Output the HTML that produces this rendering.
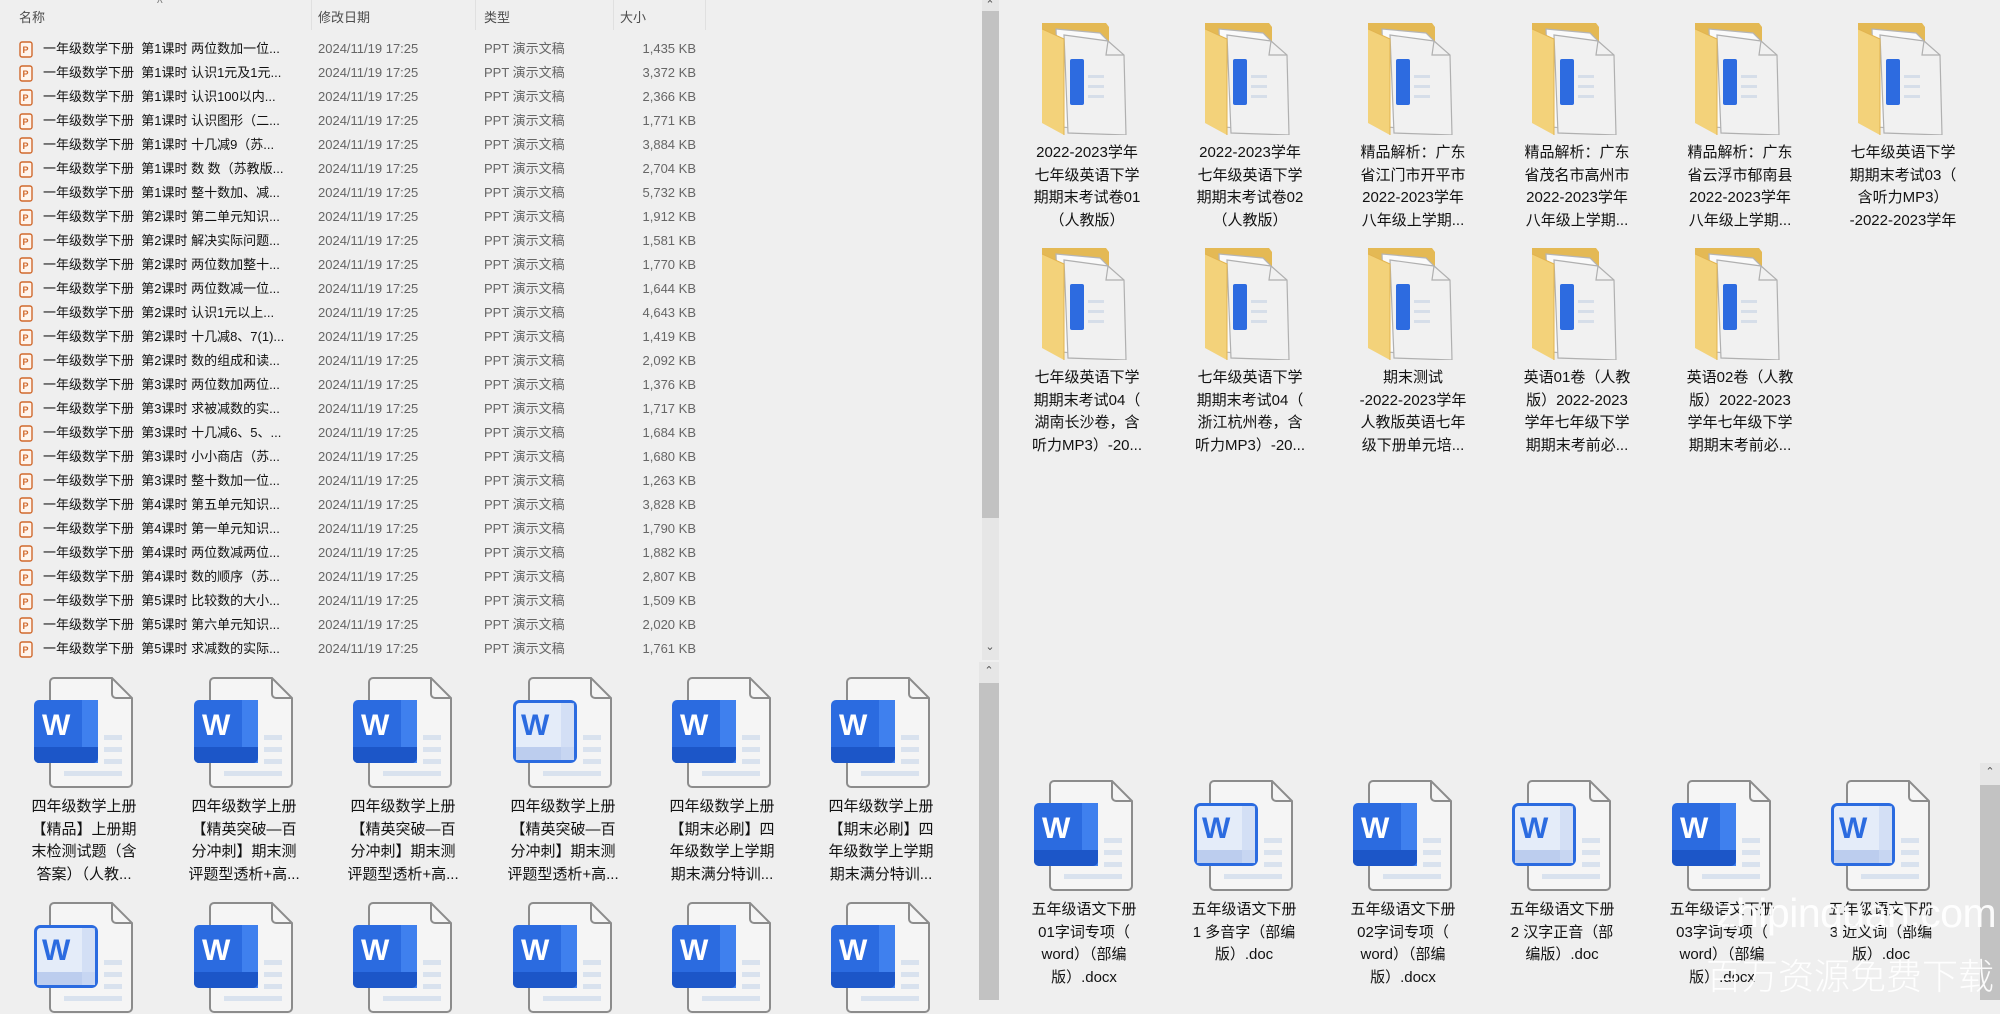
<!DOCTYPE html>
<html><head><meta charset="utf-8">
<style>
*{margin:0;padding:0;box-sizing:border-box}
body{width:2000px;height:1000px;background:#efefef;position:relative;overflow:hidden;font-family:"Liberation Sans","Noto Sans CJK SC",sans-serif}
.h{position:absolute;top:7px;font-size:13px;color:#4c4c4c}
.sep{position:absolute;top:0;width:1px;height:30px;background:#e0e0e0}
.r{position:absolute;left:0;height:24px;width:710px;font-size:13px;line-height:24px}
.r .i{position:absolute;left:19px;top:4px;width:14px;height:17px}
.r .n{position:absolute;left:43px;color:#111;white-space:nowrap}
.r .d{position:absolute;left:318px;color:#666}
.r .t{position:absolute;left:484px;color:#666}
.r .s{position:absolute;right:14px;color:#666}
.it{position:absolute;width:160px;text-align:center}
.it svg{display:block;margin:0 auto}
.it .l{font-size:15px;line-height:22.5px;color:#111;margin-top:7px;white-space:nowrap}
.sb{position:absolute;background:#e6e6e6}
.th{position:absolute;background:#c2c2c2}
.ar{position:absolute;font-size:11px;color:#555;width:18px;text-align:center}
.wm{position:absolute;color:rgba(255,255,255,0.93);white-space:nowrap}
</style></head><body>
<svg width="0" height="0" style="position:absolute">
<defs>
<symbol id="wd" viewBox="0 0 100 112">
<path d="M20,1 H78 L98,21 V106 a4,4 0 0 1 -4,4 H20 a4,4 0 0 1 -4,-4 V5 a4,4 0 0 1 4,-4 Z" fill="#f5f5f5" stroke="#8c8c8c" stroke-width="2"/>
<path d="M78,1 V17 a4,4 0 0 0 4,4 H98" fill="none" stroke="#8c8c8c" stroke-width="2"/>
<rect x="70" y="58" width="18" height="5" fill="#d9e2ee"/><rect x="70" y="70" width="18" height="5" fill="#d9e2ee"/><rect x="70" y="82" width="18" height="5" fill="#d9e2ee"/><rect x="30" y="94" width="58" height="5" fill="#d9e2ee"/>
<rect x="0" y="23" width="64" height="63" rx="5" fill="#2b6be0"/>
<rect x="48" y="23" width="16" height="63" fill="#3f80ee"/>
<path d="M0,70 H64 V81 a5,5 0 0 1 -5,5 H5 a5,5 0 0 1 -5,-5 Z" fill="#1c56c8"/>
<text x="8" y="58" font-family="Liberation Sans" font-weight="bold" font-size="30" fill="#fff">W</text>
</symbol>
<symbol id="wo" viewBox="0 0 100 112">
<path d="M20,1 H78 L98,21 V106 a4,4 0 0 1 -4,4 H20 a4,4 0 0 1 -4,-4 V5 a4,4 0 0 1 4,-4 Z" fill="#f5f5f5" stroke="#8c8c8c" stroke-width="2"/>
<path d="M78,1 V17 a4,4 0 0 0 4,4 H98" fill="none" stroke="#8c8c8c" stroke-width="2"/>
<rect x="70" y="58" width="18" height="5" fill="#d9e2ee"/><rect x="70" y="70" width="18" height="5" fill="#d9e2ee"/><rect x="70" y="82" width="18" height="5" fill="#d9e2ee"/><rect x="30" y="94" width="58" height="5" fill="#d9e2ee"/>
<rect x="1.5" y="24.5" width="61" height="60" rx="5" fill="#e4ecf9" stroke="#2b6be0" stroke-width="3"/>
<rect x="3" y="70" width="58" height="13" fill="#bccdee"/>
<rect x="48" y="26" width="13" height="57" fill="#ccdaf3" opacity=".7"/>
<text x="8" y="58" font-family="Liberation Sans" font-weight="bold" font-size="30" fill="#2b6be0">W</text>
</symbol>
<symbol id="fd" viewBox="0 0 90 112">
<path d="M0,0 H64 L67,4 V100 H0 Z" fill="#e4b954"/>
<path d="M14,6 L58,10 L72,24 L72,108 L18,104 Z" fill="#fafafa" stroke="#b5b5b5" stroke-width="1.2"/>
<path d="M22,12 L66,18 L82,32 L84,112 L26,110 Z" fill="#f1f1f1" stroke="#b0b0b0" stroke-width="1.2"/>
<path d="M66,18 L64,32 L82,32" fill="none" stroke="#b0b0b0" stroke-width="1.2"/>
<rect x="28" y="36" width="14" height="46" rx="2" fill="#2d6be0"/>
<rect x="46" y="52" width="16" height="3" fill="#d6dee9"/><rect x="46" y="62" width="16" height="3" fill="#d6dee9"/><rect x="46" y="72" width="16" height="3" fill="#d6dee9"/>
<path d="M0,6 L22,16 L22,112 L0,100 Z" fill="#f3d27a"/>
<path d="M0,6 L22,16 L22,112" fill="none" stroke="#e2b450" stroke-width="1"/>
</symbol>
<symbol id="pp" viewBox="0 0 14 17">
<rect x="1" y="1" width="12" height="15" rx="2" fill="#fff4ec" stroke="#d0692d" stroke-width="1.4"/>
<text x="3.5" y="12" font-family="Liberation Sans" font-size="9" font-weight="bold" fill="#d0692d">P</text>
</symbol>
</defs></svg>

<div class="h" style="left:19px">名称</div>
<div style="position:absolute;left:157px;top:-4px;font-size:12px;color:#777">^</div>
<div class="sep" style="left:311px"></div>
<div class="h" style="left:318px">修改日期</div>
<div class="sep" style="left:475px"></div>
<div class="h" style="left:484px">类型</div>
<div class="sep" style="left:613px"></div>
<div class="h" style="left:620px">大小</div>
<div class="sep" style="left:705px"></div>

<div class="r" style="top:37px"><svg class="i"><use href="#pp"/></svg><span class="n">一年级数学下册&nbsp;&nbsp;第1课时 两位数加一位...</span><span class="d">2024/11/19 17:25</span><span class="t">PPT 演示文稿</span><span class="s">1,435 KB</span></div>
<div class="r" style="top:61px"><svg class="i"><use href="#pp"/></svg><span class="n">一年级数学下册&nbsp;&nbsp;第1课时 认识1元及1元...</span><span class="d">2024/11/19 17:25</span><span class="t">PPT 演示文稿</span><span class="s">3,372 KB</span></div>
<div class="r" style="top:85px"><svg class="i"><use href="#pp"/></svg><span class="n">一年级数学下册&nbsp;&nbsp;第1课时 认识100以内...</span><span class="d">2024/11/19 17:25</span><span class="t">PPT 演示文稿</span><span class="s">2,366 KB</span></div>
<div class="r" style="top:109px"><svg class="i"><use href="#pp"/></svg><span class="n">一年级数学下册&nbsp;&nbsp;第1课时 认识图形（二...</span><span class="d">2024/11/19 17:25</span><span class="t">PPT 演示文稿</span><span class="s">1,771 KB</span></div>
<div class="r" style="top:133px"><svg class="i"><use href="#pp"/></svg><span class="n">一年级数学下册&nbsp;&nbsp;第1课时 十几减9（苏...</span><span class="d">2024/11/19 17:25</span><span class="t">PPT 演示文稿</span><span class="s">3,884 KB</span></div>
<div class="r" style="top:157px"><svg class="i"><use href="#pp"/></svg><span class="n">一年级数学下册&nbsp;&nbsp;第1课时 数 数（苏教版...</span><span class="d">2024/11/19 17:25</span><span class="t">PPT 演示文稿</span><span class="s">2,704 KB</span></div>
<div class="r" style="top:181px"><svg class="i"><use href="#pp"/></svg><span class="n">一年级数学下册&nbsp;&nbsp;第1课时 整十数加、减...</span><span class="d">2024/11/19 17:25</span><span class="t">PPT 演示文稿</span><span class="s">5,732 KB</span></div>
<div class="r" style="top:205px"><svg class="i"><use href="#pp"/></svg><span class="n">一年级数学下册&nbsp;&nbsp;第2课时 第二单元知识...</span><span class="d">2024/11/19 17:25</span><span class="t">PPT 演示文稿</span><span class="s">1,912 KB</span></div>
<div class="r" style="top:229px"><svg class="i"><use href="#pp"/></svg><span class="n">一年级数学下册&nbsp;&nbsp;第2课时 解决实际问题...</span><span class="d">2024/11/19 17:25</span><span class="t">PPT 演示文稿</span><span class="s">1,581 KB</span></div>
<div class="r" style="top:253px"><svg class="i"><use href="#pp"/></svg><span class="n">一年级数学下册&nbsp;&nbsp;第2课时 两位数加整十...</span><span class="d">2024/11/19 17:25</span><span class="t">PPT 演示文稿</span><span class="s">1,770 KB</span></div>
<div class="r" style="top:277px"><svg class="i"><use href="#pp"/></svg><span class="n">一年级数学下册&nbsp;&nbsp;第2课时 两位数减一位...</span><span class="d">2024/11/19 17:25</span><span class="t">PPT 演示文稿</span><span class="s">1,644 KB</span></div>
<div class="r" style="top:301px"><svg class="i"><use href="#pp"/></svg><span class="n">一年级数学下册&nbsp;&nbsp;第2课时 认识1元以上...</span><span class="d">2024/11/19 17:25</span><span class="t">PPT 演示文稿</span><span class="s">4,643 KB</span></div>
<div class="r" style="top:325px"><svg class="i"><use href="#pp"/></svg><span class="n">一年级数学下册&nbsp;&nbsp;第2课时 十几减8、7(1)...</span><span class="d">2024/11/19 17:25</span><span class="t">PPT 演示文稿</span><span class="s">1,419 KB</span></div>
<div class="r" style="top:349px"><svg class="i"><use href="#pp"/></svg><span class="n">一年级数学下册&nbsp;&nbsp;第2课时 数的组成和读...</span><span class="d">2024/11/19 17:25</span><span class="t">PPT 演示文稿</span><span class="s">2,092 KB</span></div>
<div class="r" style="top:373px"><svg class="i"><use href="#pp"/></svg><span class="n">一年级数学下册&nbsp;&nbsp;第3课时 两位数加两位...</span><span class="d">2024/11/19 17:25</span><span class="t">PPT 演示文稿</span><span class="s">1,376 KB</span></div>
<div class="r" style="top:397px"><svg class="i"><use href="#pp"/></svg><span class="n">一年级数学下册&nbsp;&nbsp;第3课时 求被减数的实...</span><span class="d">2024/11/19 17:25</span><span class="t">PPT 演示文稿</span><span class="s">1,717 KB</span></div>
<div class="r" style="top:421px"><svg class="i"><use href="#pp"/></svg><span class="n">一年级数学下册&nbsp;&nbsp;第3课时 十几减6、5、...</span><span class="d">2024/11/19 17:25</span><span class="t">PPT 演示文稿</span><span class="s">1,684 KB</span></div>
<div class="r" style="top:445px"><svg class="i"><use href="#pp"/></svg><span class="n">一年级数学下册&nbsp;&nbsp;第3课时 小小商店（苏...</span><span class="d">2024/11/19 17:25</span><span class="t">PPT 演示文稿</span><span class="s">1,680 KB</span></div>
<div class="r" style="top:469px"><svg class="i"><use href="#pp"/></svg><span class="n">一年级数学下册&nbsp;&nbsp;第3课时 整十数加一位...</span><span class="d">2024/11/19 17:25</span><span class="t">PPT 演示文稿</span><span class="s">1,263 KB</span></div>
<div class="r" style="top:493px"><svg class="i"><use href="#pp"/></svg><span class="n">一年级数学下册&nbsp;&nbsp;第4课时 第五单元知识...</span><span class="d">2024/11/19 17:25</span><span class="t">PPT 演示文稿</span><span class="s">3,828 KB</span></div>
<div class="r" style="top:517px"><svg class="i"><use href="#pp"/></svg><span class="n">一年级数学下册&nbsp;&nbsp;第4课时 第一单元知识...</span><span class="d">2024/11/19 17:25</span><span class="t">PPT 演示文稿</span><span class="s">1,790 KB</span></div>
<div class="r" style="top:541px"><svg class="i"><use href="#pp"/></svg><span class="n">一年级数学下册&nbsp;&nbsp;第4课时 两位数减两位...</span><span class="d">2024/11/19 17:25</span><span class="t">PPT 演示文稿</span><span class="s">1,882 KB</span></div>
<div class="r" style="top:565px"><svg class="i"><use href="#pp"/></svg><span class="n">一年级数学下册&nbsp;&nbsp;第4课时 数的顺序（苏...</span><span class="d">2024/11/19 17:25</span><span class="t">PPT 演示文稿</span><span class="s">2,807 KB</span></div>
<div class="r" style="top:589px"><svg class="i"><use href="#pp"/></svg><span class="n">一年级数学下册&nbsp;&nbsp;第5课时 比较数的大小...</span><span class="d">2024/11/19 17:25</span><span class="t">PPT 演示文稿</span><span class="s">1,509 KB</span></div>
<div class="r" style="top:613px"><svg class="i"><use href="#pp"/></svg><span class="n">一年级数学下册&nbsp;&nbsp;第5课时 第六单元知识...</span><span class="d">2024/11/19 17:25</span><span class="t">PPT 演示文稿</span><span class="s">2,020 KB</span></div>
<div class="r" style="top:637px"><svg class="i"><use href="#pp"/></svg><span class="n">一年级数学下册&nbsp;&nbsp;第5课时 求减数的实际...</span><span class="d">2024/11/19 17:25</span><span class="t">PPT 演示文稿</span><span class="s">1,761 KB</span></div>

<div class="sb" style="left:982px;top:0;width:17px;height:660px"></div>
<div class="th" style="left:982px;top:11px;width:17px;height:507px"></div>
<div class="ar" style="left:981px;top:-2px">&#8963;</div>
<div class="ar" style="left:981px;top:640px">&#8964;</div>
<div class="sb" style="left:979px;top:662px;width:20px;height:338px"></div>
<div class="th" style="left:979px;top:683px;width:20px;height:317px"></div>
<div class="ar" style="left:980px;top:664px">&#8963;</div>
<div class="sb" style="left:1980px;top:763px;width:20px;height:237px"></div>
<div class="th" style="left:1980px;top:785px;width:20px;height:215px"></div>
<div class="ar" style="left:1981px;top:765px">&#8963;</div>

<div class="it" style="left:4px;top:677px"><svg width="100" height="112"><use href="#wd"/></svg><div class="l">四年级数学上册<br>【精品】上册期<br>末检测试题（含<br>答案）（人教...</div></div>
<div class="it" style="left:164px;top:677px"><svg width="100" height="112"><use href="#wd"/></svg><div class="l">四年级数学上册<br>【精英突破—百<br>分冲刺】期末测<br>评题型透析+高...</div></div>
<div class="it" style="left:323px;top:677px"><svg width="100" height="112"><use href="#wd"/></svg><div class="l">四年级数学上册<br>【精英突破—百<br>分冲刺】期末测<br>评题型透析+高...</div></div>
<div class="it" style="left:483px;top:677px"><svg width="100" height="112"><use href="#wo"/></svg><div class="l">四年级数学上册<br>【精英突破—百<br>分冲刺】期末测<br>评题型透析+高...</div></div>
<div class="it" style="left:642px;top:677px"><svg width="100" height="112"><use href="#wd"/></svg><div class="l">四年级数学上册<br>【期末必刷】四<br>年级数学上学期<br>期末满分特训...</div></div>
<div class="it" style="left:801px;top:677px"><svg width="100" height="112"><use href="#wd"/></svg><div class="l">四年级数学上册<br>【期末必刷】四<br>年级数学上学期<br>期末满分特训...</div></div>
<div class="it" style="left:4px;top:902px"><svg width="100" height="112"><use href="#wo"/></svg></div>
<div class="it" style="left:164px;top:902px"><svg width="100" height="112"><use href="#wd"/></svg></div>
<div class="it" style="left:323px;top:902px"><svg width="100" height="112"><use href="#wd"/></svg></div>
<div class="it" style="left:483px;top:902px"><svg width="100" height="112"><use href="#wd"/></svg></div>
<div class="it" style="left:642px;top:902px"><svg width="100" height="112"><use href="#wd"/></svg></div>
<div class="it" style="left:801px;top:902px"><svg width="100" height="112"><use href="#wd"/></svg></div>

<div class="it" style="left:1007px;top:23px"><svg width="90" height="112"><use href="#fd"/></svg><div class="l">2022-2023学年<br>七年级英语下学<br>期期末考试卷01<br>（人教版）</div></div>
<div class="it" style="left:1170px;top:23px"><svg width="90" height="112"><use href="#fd"/></svg><div class="l">2022-2023学年<br>七年级英语下学<br>期期末考试卷02<br>（人教版）</div></div>
<div class="it" style="left:1333px;top:23px"><svg width="90" height="112"><use href="#fd"/></svg><div class="l">精品解析：广东<br>省江门市开平市<br>2022-2023学年<br>八年级上学期...</div></div>
<div class="it" style="left:1497px;top:23px"><svg width="90" height="112"><use href="#fd"/></svg><div class="l">精品解析：广东<br>省茂名市高州市<br>2022-2023学年<br>八年级上学期...</div></div>
<div class="it" style="left:1660px;top:23px"><svg width="90" height="112"><use href="#fd"/></svg><div class="l">精品解析：广东<br>省云浮市郁南县<br>2022-2023学年<br>八年级上学期...</div></div>
<div class="it" style="left:1823px;top:23px"><svg width="90" height="112"><use href="#fd"/></svg><div class="l">七年级英语下学<br>期期末考试03（<br>含听力MP3）<br>-2022-2023学年</div></div>
<div class="it" style="left:1007px;top:248px"><svg width="90" height="112"><use href="#fd"/></svg><div class="l">七年级英语下学<br>期期末考试04（<br>湖南长沙卷，含<br>听力MP3）-20...</div></div>
<div class="it" style="left:1170px;top:248px"><svg width="90" height="112"><use href="#fd"/></svg><div class="l">七年级英语下学<br>期期末考试04（<br>浙江杭州卷，含<br>听力MP3）-20...</div></div>
<div class="it" style="left:1333px;top:248px"><svg width="90" height="112"><use href="#fd"/></svg><div class="l">期末测试<br>-2022-2023学年<br>人教版英语七年<br>级下册单元培...</div></div>
<div class="it" style="left:1497px;top:248px"><svg width="90" height="112"><use href="#fd"/></svg><div class="l">英语01卷（人教<br>版）2022-2023<br>学年七年级下学<br>期期末考前必...</div></div>
<div class="it" style="left:1660px;top:248px"><svg width="90" height="112"><use href="#fd"/></svg><div class="l">英语02卷（人教<br>版）2022-2023<br>学年七年级下学<br>期期末考前必...</div></div>

<div class="it" style="left:1004px;top:780px"><svg width="100" height="112"><use href="#wd"/></svg><div class="l">五年级语文下册<br>01字词专项（<br>word）（部编<br>版）.docx</div></div>
<div class="it" style="left:1164px;top:780px"><svg width="100" height="112"><use href="#wo"/></svg><div class="l">五年级语文下册<br>1 多音字（部编<br>版）.doc</div></div>
<div class="it" style="left:1323px;top:780px"><svg width="100" height="112"><use href="#wd"/></svg><div class="l">五年级语文下册<br>02字词专项（<br>word）（部编<br>版）.docx</div></div>
<div class="it" style="left:1482px;top:780px"><svg width="100" height="112"><use href="#wo"/></svg><div class="l">五年级语文下册<br>2 汉字正音（部<br>编版）.doc</div></div>
<div class="it" style="left:1642px;top:780px"><svg width="100" height="112"><use href="#wd"/></svg><div class="l">五年级语文下册<br>03字词专项（<br>word）（部编<br>版）.docx</div></div>
<div class="it" style="left:1801px;top:780px"><svg width="100" height="112"><use href="#wo"/></svg><div class="l">五年级语文下册<br>3 近义词（部编<br>版）.doc</div></div>

<div class="wm" style="left:1716px;top:890px;font-size:41px;letter-spacing:-0.5px">zhipinquan.com</div>
<div class="wm" style="left:1706px;top:948px;font-size:36px;font-family:'Noto Sans CJK SC',sans-serif;font-weight:300">百万资源免费下载</div>
</body></html>
